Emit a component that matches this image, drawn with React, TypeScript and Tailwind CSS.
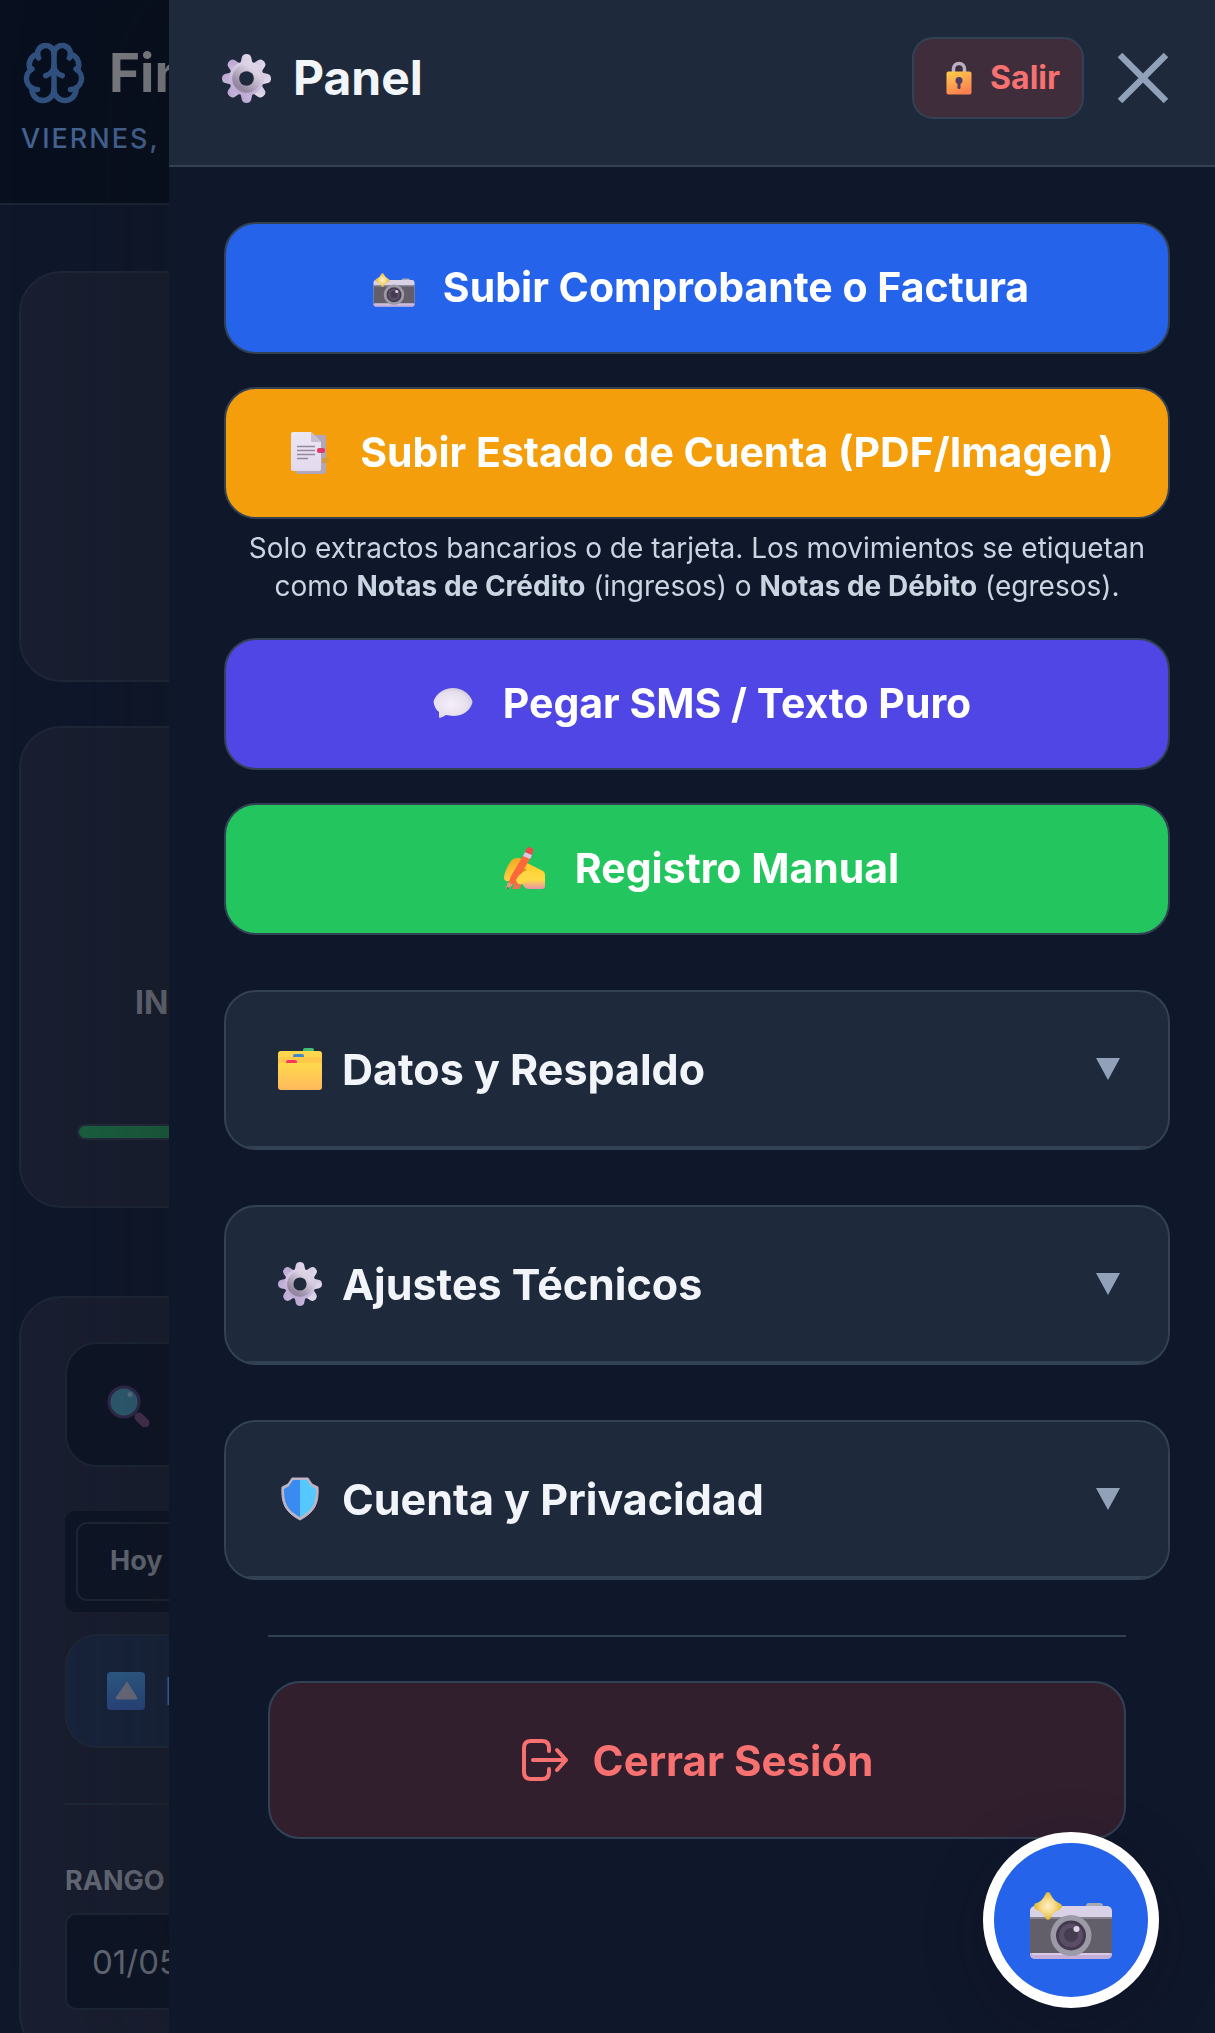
import { useState, type ReactNode } from 'react';
import { Brain } from 'lucide-react';

// Shared gradients for the emoji style icons
function IconDefs() {
  return (
    <svg className="absolute h-0 w-0" aria-hidden="true">
      <defs>
        <linearGradient id="gear" x1="0.7" y1="0" x2="0.3" y2="1">
          <stop offset="0" stopColor="#e0d9ea" />
          <stop offset="1" stopColor="#bba7d2" />
        </linearGradient>
        <linearGradient id="gearRing" x1="0.8" y1="0.1" x2="0.2" y2="0.9">
          <stop offset="0" stopColor="#ddd3e4" />
          <stop offset="1" stopColor="#94879f" />
        </linearGradient>
        <linearGradient id="lock" x1="0" y1="0" x2="0.4" y2="1">
          <stop offset="0" stopColor="#ffd04b" />
          <stop offset="1" stopColor="#fb8250" />
        </linearGradient>
        <linearGradient id="paper" x1="0" y1="0" x2="0" y2="1">
          <stop offset="0" stopColor="#ece6f3" />
          <stop offset="1" stopColor="#e2d9ee" />
        </linearGradient>
        <linearGradient id="folder" x1="0" y1="0" x2="0" y2="1">
          <stop offset="0" stopColor="#ffda4c" />
          <stop offset="1" stopColor="#feb85c" />
        </linearGradient>
        <radialGradient id="bubble" cx="0.45" cy="0.55" r="0.6">
          <stop offset="0" stopColor="#f6effa" />
          <stop offset="0.7" stopColor="#e6dfed" />
          <stop offset="1" stopColor="#cbc4d3" />
        </radialGradient>
        <radialGradient id="spark">
          <stop offset="0" stopColor="#ffeecb" />
          <stop offset="0.5" stopColor="#f6da86" />
          <stop offset="1" stopColor="#dfb52b" />
        </radialGradient>
        <linearGradient id="palm" x1="0" y1="0" x2="0" y2="1">
          <stop offset="0" stopColor="#ffc928" />
          <stop offset="0.65" stopColor="#ffdb45" />
          <stop offset="1" stopColor="#e993ab" />
        </linearGradient>
        <linearGradient id="knuckle" x1="0.3" y1="0" x2="0.6" y2="1">
          <stop offset="0" stopColor="#f0a51f" />
          <stop offset="1" stopColor="#ffd84a" />
        </linearGradient>
        <linearGradient id="upKey" x1="0" y1="0" x2="0" y2="1">
          <stop offset="0" stopColor="#2e5c87" />
          <stop offset="1" stopColor="#29457e" />
        </linearGradient>
      </defs>
    </svg>
  );
}

function GearIcon({ className }: { className: string }) {
  return (
    <svg viewBox="0 0 48 48" className={className} aria-hidden="true">
      <g fill="url(#gear)">
        {[0, 45, 90, 135].map((angle) => (
          <path
            key={angle}
            d="M19.500 3Q20.500 0 24 0t4.500 3l2 9v24l-2 9q-1 3-4.500 3t-4.500-3l-2-9V12z"
            transform={`rotate(${angle} 24 24)`}
          />
        ))}
        <circle cx="24" cy="24" r="17" />
      </g>
      <circle cx="24" cy="24" r="10.500" fill="none" stroke="url(#gearRing)" strokeWidth="7" />
      <circle cx="24" cy="24" r="7.200" fill="#1e293b" />
    </svg>
  );
}

function LockIcon() {
  return (
    <svg viewBox="0 0 26 34" className="h-[34px] w-[26px]" aria-hidden="true">
      <path d="M7.500 12V8a5.500 5.500 0 0 1 11 0v4" fill="none" stroke="#b9aec4" strokeWidth="3.500" />
      <rect x="0.500" y="10.500" width="25" height="23" rx="2" fill="url(#lock)" />
      <circle cx="13" cy="19.500" r="3.500" fill="#4f3b63" />
      <rect x="11.500" y="20" width="3" height="8" rx="1.500" fill="#4f3b63" />
    </svg>
  );
}

function CameraIcon({ className }: { className: string }) {
  return (
    <svg viewBox="0 0 82 68" className={className} aria-hidden="true">
      <rect x="56" y="11" width="17" height="8" rx="3" fill="#a9a9b6" />
      <rect x="0" y="14" width="82" height="53" rx="5" fill="#d9d1e6" />
      <rect x="0" y="25" width="82" height="37" fill="#625f6a" />
      <rect x="0" y="25" width="82" height="2" fill="#85818e" />
      <path d="M0 61h82v1a5 5 0 0 1-5 5H5a5 5 0 0 1-5-5z" fill="#c4add6" />
      <path d="M2 61h78v2H2z" fill="#d9cbe6" />
      <circle cx="41" cy="43.500" r="20.500" fill="#9d9aa8" />
      <circle cx="41" cy="43.500" r="15" fill="#44394f" />
      <circle cx="41" cy="43.500" r="12" fill="#5a4d66" />
      <circle cx="41" cy="43" r="7" fill="#443c50" />
      <circle cx="46.500" cy="37" r="3" fill="#dcd3e4" />
      <path d="M18 0q2 0 3 3 2 5 8 8 3 1 3 3t-3 4q-6 2-8 7-1 3-3 3t-3-3q-2-5-8-7-3-1-3-4t3-3q6-3 8-8 1-3 3-3z" fill="url(#spark)" />
    </svg>
  );
}

function DocsIcon() {
  return (
    <svg viewBox="0 0 44 44" className="h-11 w-11" aria-hidden="true">
      <rect x="8" y="4" width="30" height="39" rx="2" fill="#b3a6b8" />
      <path d="M5 1h18l10 10v27a2 2 0 0 1-2 2H5a2 2 0 0 1-2-2V3a2 2 0 0 1 2-2z" fill="url(#paper)" />
      <path d="M23 1l10 10H24a1 1 0 0 1-1-1z" fill="#c9bed0" />
      <path d="M9 15.500h18M9 19.500h18M9 23.500h18M9 27.500h11" stroke="#93889c" strokeWidth="1.300" />
      <rect x="29" y="17" width="8" height="5" rx="2" fill="#df3a6c" />
      <rect x="34" y="27" width="7" height="5" rx="2" fill="#d69b35" />
    </svg>
  );
}

function BubbleIcon() {
  return (
    <svg viewBox="0 0 44 44" className="h-11 w-11" aria-hidden="true">
      <path d="M22 6c9 0 16 5 19 12q1 2 0 4c-3 8-10 12-19 12l-7-1q-3 2-6 3-1 0-1-1v-5q-4-3-5-8-1-2 0-4c3-7 10-12 19-12z" fill="url(#bubble)" />
    </svg>
  );
}

function WritingIcon() {
  return (
    <svg viewBox="0 0 44 44" className="h-11 w-11" aria-hidden="true">
      <path d="M16 17l6-2 18 9q2 1 2 4v11q0 3-3 3H26q-4 0-6-4l-6-5z" fill="url(#palm)" />
      <path d="M9 42l4-8 5 3q1 4-3 5z" fill="#ee7150" />
      <path d="M1 31c0-5 4-13 7-17q2-3 7-3t6 5l-8 16-6 2-4 0q-2-1-2-3z" fill="url(#knuckle)" />
      <path d="M19 17l-7 16 12-9z" fill="#e39a1c" />
      <path d="M21 7l7 3-15 26-6 3-2-2 3-8z" fill="#fd6a3a" />
      <path d="M13 33q3-6 9-9 6-1 8 3 1 3-3 5l-8 5q-5 1-6-4z" fill="#ffd643" />
      <path d="M5 35l5 3-6 4q-1 0-1-1z" fill="#e59a80" />
      <path d="M4 40l2 1-2 1z" fill="#6e3b4a" />
      <path d="M22 5l7 3-2 4-7-3z" fill="#e3c8e6" />
      <path d="M24 1q1-1 2-1l4 2q1 1 0 2l-1 4-7-3z" fill="#f4474b" />
    </svg>
  );
}

function FolderIcon() {
  return (
    <svg viewBox="0 0 44 44" className="h-11 w-11" aria-hidden="true">
      <rect x="25" y="1" width="11" height="6" rx="2" fill="#46bd75" />
      <rect x="0" y="4" width="44" height="30" rx="3" fill="url(#folder)" />
      <rect x="15" y="7" width="11" height="6" rx="2" fill="#4289c9" />
      <rect x="0" y="10" width="44" height="28" rx="3" fill="#ffc84a" />
      <rect x="8" y="13" width="11" height="6" rx="2" fill="#f8395f" />
      <rect x="0" y="16" width="44" height="27" rx="3" fill="url(#folder)" />
    </svg>
  );
}

function ShieldIcon() {
  return (
    <svg viewBox="0 0 44 44" className="h-11 w-11" aria-hidden="true">
      <path d="M14 1h16l4 6 6 3c1 16-3 25-18 33C7 35 3 26 4 10l6-3z" fill="#bdb4c4" strokeLinejoin="round" stroke="#bdb4c4" />
      <path d="M22 3h-7l-4 6-5 3c0 14 3 21 16 28z" fill="#398bf0" />
      <path d="M22 3h7l4 6 5 3c0 14-3 21-16 28z" fill="#55c8ff" />
    </svg>
  );
}

function LensIcon() {
  return (
    <svg viewBox="0 0 44 44" className="h-11 w-11" aria-hidden="true">
      <path d="M32 34l6 6" stroke="#452f4f" strokeWidth="9" strokeLinecap="round" />
      <circle cx="17" cy="19" r="15" fill="#2d5b70" stroke="#30294a" strokeWidth="3" />
      <circle cx="23" cy="11.500" r="2.500" fill="#557288" />
    </svg>
  );
}

function UpKeyIcon() {
  return (
    <svg viewBox="0 0 38 38" className="h-[38px] w-[38px] shrink-0" aria-hidden="true">
      <rect width="38" height="38" rx="4" fill="url(#upKey)" />
      <path d="M20 10l10 16q0 1-1 1H10q-1 0-1-1z" fill="#6b6c7d" stroke="#6b6c7d" strokeLinejoin="round" />
    </svg>
  );
}

function LogoutIcon() {
  return (
    <svg
      viewBox="0 0 48 44"
      className="h-11 w-12"
      fill="none"
      stroke="currentColor"
      strokeWidth="4"
      strokeLinecap="round"
      strokeLinejoin="round"
      aria-hidden="true"
    >
      <path d="M28 13V10q0-7-7-7H10q-7 0-7 7v24q0 7 7 7h11q7 0 7-7v-3M12 22h33M36 12l9 10-9 10" />
    </svg>
  );
}

interface ActionButtonProps {
  color: string;
  icon: ReactNode;
  label: string;
}

function ActionButton({ color, icon, label }: ActionButtonProps) {
  return (
    <button
      className={`flex h-[132px] w-full items-center justify-center gap-7 rounded-[32px] border-2 border-[#334155] pl-2 text-[41px] font-bold whitespace-nowrap text-white ${color}`}
    >
      {icon}
      {label}
    </button>
  );
}

function Section({ icon, title }: { icon: ReactNode; title: string }) {
  return (
    <section className="overflow-hidden rounded-[32px] border-2 border-[#334155] bg-[#1e293b]">
      <button className="flex h-[156px] w-full items-center justify-between border-b-2 border-[#334155] pr-12 pl-[52px]">
        <span className="flex items-center gap-5 text-[43px] font-bold text-slate-100">
          {icon}
          {title}
        </span>
        <svg viewBox="0 0 24 24" className="h-6 w-6 fill-slate-400" aria-hidden="true">
          <path d="M0 1h24L12 23z" />
        </svg>
      </button>
    </section>
  );
}

function Dashboard() {
  const [from, setFrom] = useState('01/05/2026');

  return (
    <div className="bg-[#0f172b]">
      <header className="flex h-[205px] flex-col border-b-2 border-[#1b2534] bg-[#080f1e] px-[21px] pt-10">
        <h1 className="flex items-center gap-[22px] text-[53px] leading-[66px] font-bold text-[#7c7e84]">
          <Brain className="h-[66px] w-[66px] text-[#31517f]" />
          Fin
        </h1>
        <p className="pt-[13px] text-[27px] leading-10 font-medium tracking-[2px] text-[#456493]">VIERNES, 1</p>
      </header>

      <main className="flex flex-col px-[19px] pt-[66px]">
        <div className="h-[411px] rounded-[42px] border-2 border-[#1e2737] bg-[#191e30]"></div>

        <div className="mt-11 flex h-[482px] flex-col justify-end rounded-[42px] border-2 border-[#1e2737] bg-[#191e30] px-14 pb-[66px]">
          <p className="mb-[101px] ml-[58px] text-[32px] leading-10 font-bold text-[#636975]">INGRESOS</p>
          <div className="h-4 rounded-full border-2 border-[#232a3b] bg-[#1b5f3f]"></div>
        </div>

        <div className="mt-[88px] flex flex-col rounded-[42px] border-2 border-[#1e2737] bg-[#191e30] p-11">
          <label className="flex h-[125px] items-center gap-6 rounded-[32px] border-2 border-[#1c2635] bg-[#0e1526] px-10">
            <LensIcon />
            <input aria-label="Buscar" className="min-w-0 flex-1 bg-transparent text-[34px]" />
          </label>

          <div className="mt-11 flex rounded-[11px] bg-[#0e1526] p-[11px]">
            <button className="h-[79px] rounded-[11px] border-2 border-[#1c2635] px-8 text-[27px] font-bold text-[#636975]">
              Hoy
            </button>
          </div>

          <button className="mt-[22px] flex h-[114px] items-center gap-5 rounded-[32px] border-2 border-[#1e2838] bg-[#18243c] px-10 text-[38px] font-bold text-[#426390]">
            <UpKeyIcon />
            Filtros
          </button>

          <hr className="mt-[55px] border-t-2 border-[#1e2737]" />

          <label htmlFor="from" className="mt-14 text-[27px] leading-10 font-bold text-[#636975]">
            RANGO DE FECHAS
          </label>
          <input
            id="from"
            value={from}
            onChange={(e) => setFrom(e.target.value)}
            className="mt-3 h-[97px] w-full rounded-[11px] border-2 border-[#1c2635] bg-[#0e1526] px-[25px] text-[33px] text-[#636975]"
          />
        </div>
      </main>
    </div>
  );
}

export default function App() {
  return (
    <div className="relative h-screen overflow-hidden bg-[#0f172b] font-['Inter',sans-serif]">
      <IconDefs />
      <Dashboard />

      {/* Drawer */}
      <div className="fixed inset-0 flex pl-[169px]">
        <aside className="flex flex-1 flex-col bg-[#0f172a] shadow-[-20px_0_120px_rgba(16,20,20,0.25)]">
          <header className="flex items-center justify-between border-b-2 border-[#334155] bg-[#1e293b] pt-[37px] pr-[46px] pb-[46px] pl-[53px]">
            <h2 className="flex items-center gap-[22px] text-[48px] font-bold text-slate-100">
              <GearIcon className="h-[49px] w-[49px]" />
              Panel
            </h2>
            <div className="flex items-center gap-[33px]">
              <button className="flex h-[82px] items-center gap-[18px] rounded-[21px] border-2 border-[#334155] bg-[#3f2d3c] pr-[22px] pl-8 text-[32px] font-bold text-[#f87171]">
                <LockIcon />
                Salir
              </button>
              <button aria-label="Cerrar" className="text-slate-400">
                <svg viewBox="0 0 52 52" className="h-[52px] w-[52px]" stroke="currentColor" strokeWidth="6.500">
                  <path d="M3 3l46 46M49 3L3 49" />
                </svg>
              </button>
            </div>
          </header>

          <div className="flex flex-col gap-[55px] pt-[55px] pr-[45px] pl-[55px]">
            <div className="flex flex-col gap-[33px]">
              <ActionButton
                color="bg-[#2563eb]"
                icon={<CameraIcon className="mt-1 h-[34px] w-[42px]" />}
                label="Subir Comprobante o Factura"
              />
              <div>
                <ActionButton color="bg-[#f59e0b]" icon={<DocsIcon />} label="Subir Estado de Cuenta (PDF/Imagen)" />
                <p className="mt-[10px] text-center text-[28px] leading-[38px] text-slate-300">
                  Solo extractos bancarios o de tarjeta. Los movimientos se etiquetan
                  <br />
                  como <strong>Notas de Crédito</strong> (ingresos) o <strong>Notas de Débito</strong> (egresos).
                </p>
              </div>
              <ActionButton color="bg-[#4f46e5]" icon={<BubbleIcon />} label="Pegar SMS / Texto Puro" />
              <ActionButton color="bg-[#22c55e]" icon={<WritingIcon />} label="Registro Manual" />
            </div>

            <Section icon={<FolderIcon />} title="Datos y Respaldo" />
            <Section icon={<GearIcon className="h-11 w-11" />} title="Ajustes Técnicos" />
            <Section icon={<ShieldIcon />} title="Cuenta y Privacidad" />

            <div className="mx-11 border-t-2 border-[#334155] pt-11">
              <button className="flex h-[158px] w-full items-center justify-center gap-6 rounded-[32px] border-2 border-[#334155] bg-[#311f2e] text-[42px] font-bold text-[#f87171]">
                <LogoutIcon />
                Cerrar Sesión
              </button>
            </div>
          </div>
        </aside>
      </div>

      <button
        aria-label="Tomar foto"
        className="fixed right-14 bottom-[25px] flex h-44 w-44 items-center justify-center rounded-full border-[11px] border-white bg-[#2563eb] pt-3 shadow-[0_16px_60px_rgba(16,16,36,0.3)]"
      >
        <CameraIcon className="h-[68px] w-[82px]" />
      </button>
    </div>
  );
}
